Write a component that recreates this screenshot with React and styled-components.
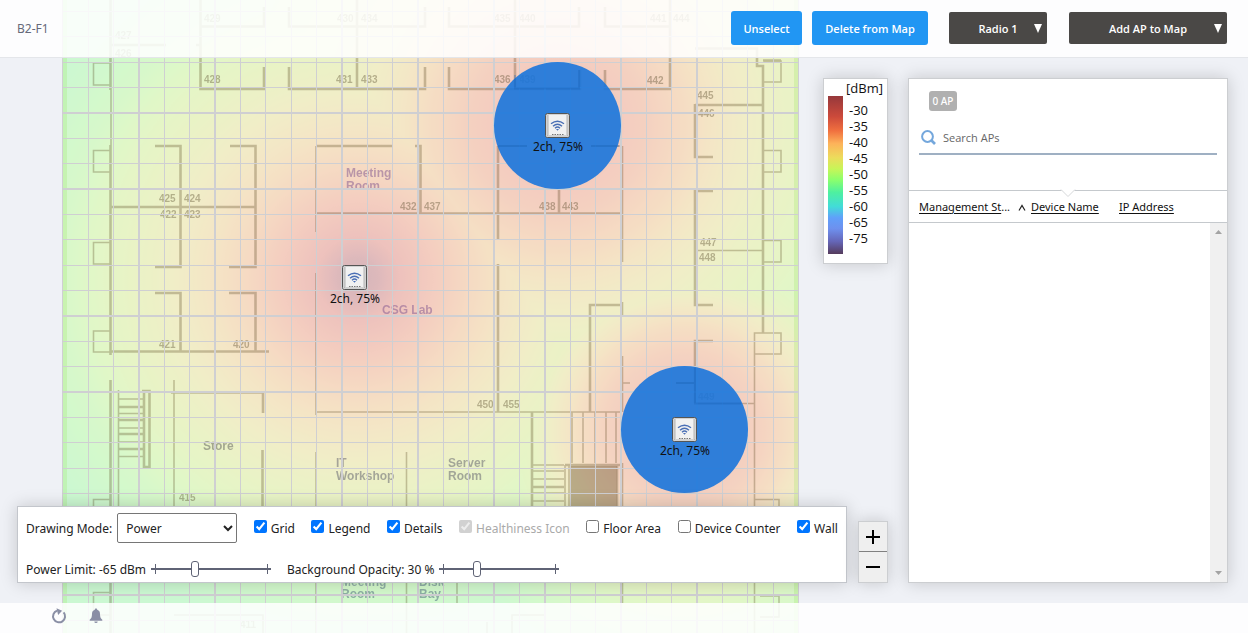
import React, { useState } from 'react'
import styled, { createGlobalStyle } from 'styled-components'

const GlobalStyle = createGlobalStyle`
  * {
    box-sizing: border-box;
  }
  body {
    background: #eff1f6;
    color: #222;
    font-family: "Noto Sans", "Open Sans", sans-serif;
    font-size: 12px;
    margin: 0;
  }
  button, input, select {
    font-family: inherit;
    margin: 0;
  }
`

const Page = styled.div`
  display: grid;
  grid-template-columns: minmax(0, 1fr);
  grid-template-rows: 58px 1fr 30px;
  min-height: 100vh;
  overflow: hidden;
`

const MapLayer = styled.div`
  display: flex;
  grid-column: 1;
  grid-row: 1 / -1;
  height: 100vh;
  padding-left: 62px;
  svg {
    flex: none;
    height: 100%;
    width: 737px;
  }
`

const Header = styled.header`
  align-items: center;
  background: rgba(255, 255, 255, 0.86);
  border-bottom: 1px solid #e4e6ea;
  display: flex;
  grid-column: 1;
  grid-row: 1;
  padding: 0 21px 1px 17px;
  z-index: 1;
  h1 {
    color: #666a7a;
    flex: 1;
    font-size: 12px;
    font-weight: 400;
    margin: 0;
  }
`

const Actions = styled.div`
  align-items: center;
  display: flex;
  gap: 10px;
  margin-right: 21px;
`

const ActionButton = styled.button`
  background: #2196f3;
  border: 0;
  border-radius: 3px;
  color: #fff;
  font-family: "Open Sans", sans-serif;
  font-size: 11px;
  font-weight: 600;
  height: 34px;
  padding: 0;
  width: ${props => props.$width}px;
`

const Menus = styled.div`
  display: flex;
  gap: 22px;
`

const MenuBox = styled.div`
  position: relative;
  width: ${props => props.$width}px;
  select {
    appearance: none;
    background: #4a4846;
    border: 0;
    border-radius: 2px;
    color: #fff;
    font-family: "Open Sans", sans-serif;
    font-size: 11px;
    font-weight: 600;
    height: 32px;
    padding: 0;
    text-align: center;
    text-align-last: center;
    width: 100%;
  }
  svg {
    pointer-events: none;
    position: absolute;
    right: 4px;
    top: 12px;
  }
`

const Main = styled.main`
  display: flex;
  gap: 20px;
  grid-column: 1;
  grid-row: 2;
  padding: 20px 20px 20px 17px;
  z-index: 1;
`

const MapTools = styled.div`
  display: flex;
  flex: 1;
  flex-direction: column;
  justify-content: space-between;
  min-width: 0;
`

const panelShadow = '0 0 16px rgba(0, 0, 0, 0.18)'

const LegendBox = styled.section`
  align-self: flex-end;
  background: #fff;
  border: 1px solid #ccced1;
  box-shadow: ${panelShadow};
  color: #111;
  font-family: "Open Sans", sans-serif;
  font-size: 13px;
  padding: 1px 4px 9px;
  width: 65px;
  h2 {
    font-size: 13px;
    font-weight: 400;
    line-height: 16px;
    margin: 0;
    text-align: right;
  }
`

const LegendScale = styled.div`
  display: flex;
  gap: 6px;
  ul {
    line-height: 16px;
    list-style: none;
    margin: 0;
    padding: 6px 0 8px;
  }
`

const ColorBar = styled.div`
  background: linear-gradient(
    #96383b, #cc4a3b 13%, #f0703f 22%, #fdb25a 30%, #ecdc5c 39%, #c8f558 46%,
    #8cff6c 53%, #4ef0a0 61%, #42dcd8 70%, #60a0fa 77%, #6e90ee 84%, #6566b8 92%, #553b5c
  );
  width: 15px;
`

const BottomRow = styled.div`
  align-items: flex-end;
  display: flex;
  gap: 11px;
`

const Controls = styled.form`
  background: #fff;
  border: 1px solid #c3c6cc;
  box-shadow: ${panelShadow};
  flex: 1;
  min-width: 0;
  padding: 5px 8px 0;
`

const ControlRow = styled.div`
  align-items: center;
  display: flex;
  height: ${props => props.$height}px;
  justify-content: ${props => (props.$spread ? 'space-between' : 'flex-start')};
  gap: ${props => (props.$spread ? 0 : 16)}px;
  margin-top: ${props => (props.$spread ? 0 : 12)}px;
  white-space: nowrap;
`

const Field = styled.label`
  align-items: center;
  display: flex;
  gap: 5px;
`

const ModeSelect = styled.select`
  background: #fff;
  border: 1px solid #767676;
  border-radius: 2px;
  color: #222;
  font-size: 12px;
  height: 30px;
  padding: 0 4px;
  width: 120px;
`

const CheckLabel = styled.label`
  align-items: center;
  color: ${props => (props.$muted ? '#aaa' : '#222')};
  display: flex;
  gap: 4px;
  input {
    height: 13px;
    margin-bottom: 3px;
    width: 13px;
  }
`

const Slider = styled.input`
  appearance: none;
  background:
    linear-gradient(#5f6375, #5f6375) 4px 50% / 1px 10px no-repeat,
    linear-gradient(#5f6375, #5f6375) 116px 50% / 1px 10px no-repeat,
    linear-gradient(#5f6375, #5f6375) 0 50% / 100% 2px no-repeat;
  height: 16px;
  width: 120px;
  &::-webkit-slider-thumb {
    appearance: none;
    background: #fff;
    border: 1px solid #5f6375;
    border-radius: 3px;
    height: 16px;
    width: 8px;
  }
`

const ZoomBox = styled.div`
  border: 1px solid #ccced1;
  box-shadow: ${panelShadow};
  display: flex;
  flex-direction: column;
  width: 30px;
`

const ZoomButton = styled.button`
  align-items: center;
  background: #efefef;
  border: 0;
  display: flex;
  height: 29px;
  justify-content: center;
  padding: 0;
  & + & {
    border-top: 1px solid #808080;
    height: 31px;
  }
`

const ApPanel = styled.aside`
  background: #fff;
  border: 1px solid #ccced1;
  box-shadow: ${panelShadow};
  display: flex;
  flex-direction: column;
  width: 320px;
`

const PanelTop = styled.div`
  border-bottom: 1px solid #c5c9cd;
  height: 112px;
  padding: 12px 10px 0;
  position: relative;
`

const Badge = styled.span`
  background: #b0b0b0;
  border-radius: 3px;
  color: #fff;
  display: block;
  font-size: 10px;
  font-weight: 500;
  height: 20px;
  line-height: 20px;
  margin-left: 10px;
  text-align: center;
  width: 28px;
`

const SearchBox = styled.label`
  align-items: center;
  border-bottom: 2px solid #9fb0c3;
  display: flex;
  gap: 7px;
  height: 34px;
  margin-top: 10px;
  padding-left: 2px;
  input {
    border: 0;
    flex: 1;
    font-family: "Open Sans", sans-serif;
    font-size: 11px;
    outline: 0;
    padding: 0;
  }
  input::placeholder {
    color: #666;
  }
`

const Notch = styled.svg`
  bottom: -8px;
  left: 151px;
  position: absolute;
`

const ApTable = styled.table`
  border-bottom: 1px solid #c5c9cd;
  border-collapse: collapse;
  height: 32px;
  table-layout: fixed;
  width: 100%;
  th {
    font-weight: 400;
    padding: 0;
    text-align: left;
    white-space: nowrap;
  }
  th:first-child {
    padding-left: 10px;
    width: 109px;
  }
  th:nth-child(2) {
    width: 101px;
  }
`

const SortButton = styled.button`
  background: none;
  border: 0;
  color: #111;
  font-size: 11px;
  padding: 0;
  span {
    text-decoration: underline;
    text-underline-offset: 2px;
  }
  svg {
    margin-right: 5px;
  }
`

const ListArea = styled.div`
  display: flex;
  flex: 1;
  justify-content: flex-end;
`

const ScrollTrack = styled.div`
  align-items: center;
  background: #f0f0f0;
  display: flex;
  flex-direction: column;
  justify-content: space-between;
  padding: 7px 0;
  width: 17px;
`

const Footer = styled.footer`
  align-items: center;
  background: rgba(255, 255, 255, 0.86);
  display: flex;
  gap: 22px;
  grid-column: 1;
  grid-row: 3;
  padding: 0 51px 4px;
  z-index: 1;
`

const IconButton = styled.button`
  background: none;
  border: 0;
  color: #8a8fa5;
  display: flex;
  padding: 0;
`

const gridColumns = [
  62.5, 88.5, 113.5, 139, 164.5, 189.5, 215, 240.5, 265.5, 291.5, 316.5, 342, 367.5, 392.5, 418,
  443.5, 468.5, 494, 519.5, 545, 570.5, 595.5, 621, 646.5, 671.5, 697, 722.5, 747.5, 773.5, 798.5
]
const gridRows = [
  11.5, 36.5, 62.5, 87.5, 113, 138.5, 163.5, 189, 214.5, 239.5, 265.5, 290.5, 316, 341.5, 366.5,
  392, 417.5, 442.5, 468.5, 493.5, 519, 544.5, 569.5, 595, 620.5
]

// thick walls, then thin ones
const walls = `
  M110.5 0V90 M110.5 145V355 M110.5 380V633 M110 45H166 M196 45H201
  M200.5 0V89H265 M264 67V89 M200 26.5H264V7
  M289 67V89H425V67 M357 0V89 M289 7V26.5H425V7
  M449 67V89H580V70 M515 0V89 M449 7V26.5H579V7
  M605 70V89H670V0 M605 7V26.5H670
  M695 48.5H757V66H763V333 M763 60.5H781
  M695 105H763 M695 104V157H713 M713 191H695V305H713 M713 341H695V403
  M155 146H180.5V267H155 M230 146H255.5V267H229 M110 207H255
  M155 293H180.5V351 M229 293H255.5V351 M110 351.5H269
  M316 146H392 M415 146H420.5V213 M498 146V240 M498 264V412 M559 190V213
  M316 213.5H621 M590 412V305H622 M171 392.5H263V413 M262.5 450V520
  M144 391V467H149.5V391H142 M532 412V506 M565 465H622
  M118 407H143 M118 420H143 M118 434H143 M118 449H143 M532 487H564
`
const thinWalls = `
  M111 90V145 M93.5 63H110 M93.5 63V85H110 M110 150.5H93.5V172H110
  M110 242.5H93.5V264H110 M110 331H93.5V352H110 M110 499.5H93.5V510 M110 592.5H93.5V615H110
  M764 61H781V82H764 M764 150.5H781V172H764 M764 240.5H781V262H764
  M754.5 633V333H781V354H755 M754 499.5H779V510 M760 596H779V617H760
  M697 250.5H763 M676 383H694 M697 403.5H754 M622 383H630
  M316 146V232 M316 273V415 M316 452V506 M316 583V633 M316 412H622
  M498 146H527 M591 146H622 M622.5 146V262 M622.5 302V317 M622.5 356V412 M622.5 463V603
  M174 380V520 M118.5 390V510 M118 399H143 M118 413.5H143
  M118 428H143 M118 442H143 M118 456.5H143
  M406.5 452V506 M406.5 583V633 M457 583V603
  M572 412V463 M583 412V463 M595 412V463 M606 412V463 M616 412V463
  M532 465H564 M532 471H564 M532 479H564 M532 493H564 M532 501H564
  M565 465V510 M569 465V510 M617.5 465V510 M174 615H263V633 M512 633V615H545 M487 622V633
`

const roomNumbers = [
  ['427', 115, 39], ['426', 115, 57], ['429', 204, 22], ['430', 337, 22], ['434', 361, 22],
  ['435', 494, 22], ['440', 519, 22], ['441', 650, 22], ['444', 673, 22],
  ['428', 204, 83], ['431', 336, 83], ['433', 361, 83], ['436', 494, 83], ['439', 519, 83],
  ['442', 647, 84], ['445', 697, 99], ['446', 698, 117], ['425', 159, 202], ['424', 184, 202],
  ['422', 160, 218], ['423', 184, 218], ['432', 400, 210], ['437', 424, 210], ['438', 539, 210],
  ['443', 562, 210], ['447', 700, 246], ['448', 699, 261], ['421', 159, 348], ['420', 233, 348],
  ['449', 698, 400], ['450', 477, 408], ['455', 503, 408], ['415', 179, 501], ['411', 240, 628]
]

const roomNames = [
  ['Meeting', 346, 177, '#7a4f8c'], ['Room', 346, 190, '#7a4f8c'], ['CSG Lab', 382, 314, '#7a4f8c'],
  ['Store', 203, 450, '#555'], ['IT', 336, 467, '#555566'], ['Workshop', 336, 480, '#555566'],
  ['Server', 448, 467, '#555566'], ['Room', 448, 480, '#555566'],
  ['Meeting', 341, 586, '#44607a'], ['Room', 341, 598, '#44607a'],
  ['Disk', 419, 586, '#44607a'], ['Bay', 419, 598, '#44607a']
]

// signal strength by distance from the access point, 0 to 1
const signals = [
  {
    id: 'ap1', x: 358, y: 278, r: 400,
    stops: [[0, 1], [0.05, 0.97], [0.12, 0.88], [0.2, 0.79], [0.3, 0.67], [0.4, 0.56], [0.5, 0.46], [0.62, 0.36], [0.74, 0.23], [1, 0.06]]
  },
  {
    id: 'ap2', x: 558, y: 125, r: 400,
    stops: [[0, 0.88], [0.15, 0.81], [0.22, 0.77], [0.32, 0.67], [0.42, 0.55], [0.54, 0.44], [0.66, 0.36], [0.8, 0.25], [1, 0.1]]
  },
  {
    id: 'ap3', x: 684, y: 430, r: 260,
    stops: [[0, 0.88], [0.2, 0.81], [0.31, 0.74], [0.4, 0.65], [0.48, 0.54], [0.58, 0.4], [0.72, 0.28], [1, 0.12]]
  }
]

const accessPoints = [
  { id: 'ap1', x: 354, y: 278, selected: false },
  { id: 'ap2', x: 557, y: 126, selected: true },
  { id: 'ap3', x: 684, y: 430, selected: true }
]

const gray = value => {
  const level = Math.round(value * 255)
  return `rgb(${level}, ${level}, ${level})`
}

const Heatmap = () => (
  <g>
    <defs>
      <filter id="ramp" x="0" y="0" width="1" height="1" colorInterpolationFilters="sRGB">
        <feComponentTransfer>
          <feFuncR type="table" tableValues=".75 .79 .83 .88 .915 .945 .96 .965 .957 .933 .84" />
          <feFuncG type="table" tableValues=".973 .973 .977 .972 .955 .933 .9 .855 .804 .76 .71" />
          <feFuncB type="table" tableValues=".86 .83 .8 .784 .776 .784 .776 .765 .753 .741 .735" />
        </feComponentTransfer>
      </filter>
      {signals.map(signal => (
        <radialGradient key={signal.id} id={signal.id} gradientUnits="userSpaceOnUse" cx={signal.x} cy={signal.y} r={signal.r}>
          {signal.stops.map(([offset, value]) => (
            <stop key={offset} offset={offset} stopColor={gray(value)} />
          ))}
        </radialGradient>
      ))}
    </defs>
    <g filter="url(#ramp)">
      <rect x="62" width="737" height="633" fill={gray(0.06)} />
      {signals.map(signal => (
        <rect key={signal.id} x="62" width="737" height="633" fill={`url(#${signal.id})`} style={{ mixBlendMode: 'lighten' }} />
      ))}
    </g>
    <path d="M62 0h5v633h-5z M794 0h5v633h-5z" fill="#9be564" opacity=".25" />
  </g>
)

const ApMarker = ({ x, y }) => (
  <g>
    <rect x={x - 11.5} y={y - 12.5} width="24" height="24" rx="2" fill="#d2d2d2" stroke="#555" />
    <rect x={x - 9} y={y - 11} width="19" height="20" fill="#f1f1f1" />
    <path d={`M${x - 9} ${y - 11}v20l-2 2 M${x + 10} ${y - 11}v20l2 2`} fill="none" stroke="#b5b5b5" />
    <g fill="none" stroke="#4a6fb5" strokeWidth="1.4">
      <path d={`M${x - 6} ${y - 2.2}Q${x + 0.5} ${y - 7.2} ${x + 7} ${y - 2.2}`} />
      <path d={`M${x - 4} ${y + 0.2}Q${x + 0.5} ${y - 3.8} ${x + 5} ${y + 0.2}`} />
      <path d={`M${x - 2} ${y + 2.2}Q${x + 0.5} ${y} ${x + 3} ${y + 2.2}`} />
    </g>
    <path d={`M${x - 1} ${y + 3}h3l-1.5 1.8z`} fill="#4a6fb5" />
    <path d={`M${x - 5} ${y + 8.5}h12`} stroke="#777" strokeDasharray="1.5 1" />
    <text x={x + 1} y={y + 25} textAnchor="middle" fontSize="12" fill="#111">2ch, 75%</text>
  </g>
)

const FloorMap = ({ showGrid }) => (
  <svg viewBox="62 0 737 633" preserveAspectRatio="xMinYMin slice" role="img" aria-label="B2-F1">
    <Heatmap />
    <g fill="none" stroke="#4d3a12" opacity=".28">
      <path d={walls} strokeWidth="2.6" />
      <path d={thinWalls} strokeWidth="1.6" />
    </g>
    <rect x="570" y="466" width="47" height="45" fill="#5c4420" opacity=".38" />
    <g fontFamily="Liberation Sans, sans-serif" fontWeight="700">
      <g fontSize="10" fill="#4d4020" opacity=".36">
        {roomNumbers.map(([label, x, y]) => <text key={label} x={x} y={y}>{label}</text>)}
      </g>
      <g fontSize="12" opacity=".48">
        {roomNames.map(([label, x, y, color]) => <text key={`${label}${x}${y}`} x={x} y={y} fill={color}>{label}</text>)}
      </g>
    </g>
    {showGrid && (
      <g stroke="#cfcfd2">
        {gridColumns.map(x => <path key={x} d={`M${x} 0V633`} strokeWidth={x % 1 ? 1 : 2} />)}
        {gridRows.map(y => <path key={y} d={`M62 ${y}H799`} strokeWidth={y % 1 ? 1 : 2} />)}
      </g>
    )}
    {accessPoints.filter(ap => ap.selected).map(ap => (
      <circle key={ap.id} cx={ap.x + 0.5} cy={ap.y - 0.5} r="63.5" fill="#1976db" opacity=".9" />
    ))}
    <path d="M515 75V88.5H579V70 M498 146H527 M591 146H619 M676 383H694 M695 368V403.5H741" fill="none" stroke="#1b5fb4" strokeWidth="2" opacity=".3" />
    {accessPoints.map(ap => <ApMarker key={ap.id} x={ap.x} y={ap.y} />)}
  </svg>
)

const MenuSelect = ({ label, width }) => (
  <MenuBox $width={width}>
    <select aria-label={label}>
      <option>{label}</option>
    </select>
    <svg width="10" height="9" viewBox="0 0 10 9" aria-hidden="true">
      <path d="M1 0h8L5 9z" fill="#fff" />
    </svg>
  </MenuBox>
)

const Legend = () => (
  <LegendBox>
    <h2>[dBm]</h2>
    <LegendScale>
      <ColorBar />
      <ul>
        {[-30, -35, -40, -45, -50, -55, -60, -65, -75].map(level => <li key={level}>{level}</li>)}
      </ul>
    </LegendScale>
  </LegendBox>
)

const options = [
  { name: 'Grid', checked: true },
  { name: 'Legend', checked: true },
  { name: 'Details', checked: true },
  { name: 'Healthiness Icon', checked: true, disabled: true },
  { name: 'Floor Area', checked: false },
  { name: 'Device Counter', checked: false },
  { name: 'Wall', checked: true }
]

const App = () => {
  const [checks, setChecks] = useState(() => Object.fromEntries(options.map(o => [o.name, o.checked])))
  const [limit, setLimit] = useState(-65)
  const [opacity, setOpacity] = useState(30)

  return (
    <Page>
      <GlobalStyle />
      <MapLayer>
        <FloorMap showGrid={checks.Grid} />
      </MapLayer>
      <Header>
        <h1>B2-F1</h1>
        <Actions>
          <ActionButton type="button" $width={71}>Unselect</ActionButton>
          <ActionButton type="button" $width={116}>Delete from Map</ActionButton>
        </Actions>
        <Menus>
          <MenuSelect label="Radio 1" width={98} />
          <MenuSelect label="Add AP to Map" width={158} />
        </Menus>
      </Header>
      <Main>
        <MapTools>
          <Legend />
          <BottomRow>
            <Controls>
              <ControlRow $height={32} $spread>
                <Field>
                  Drawing Mode:
                  <ModeSelect>
                    <option>Power</option>
                  </ModeSelect>
                </Field>
                {options.map(option => (
                  <CheckLabel key={option.name} $muted={option.disabled}>
                    <input
                      type="checkbox"
                      checked={checks[option.name]}
                      disabled={option.disabled}
                      onChange={e => setChecks({ ...checks, [option.name]: e.target.checked })}
                    />
                    {option.name}
                  </CheckLabel>
                ))}
              </ControlRow>
              <ControlRow $height={26}>
                <Field>
                  Power Limit: {limit} dBm
                  <Slider type="range" min="-80" max="-38" value={limit} onChange={e => setLimit(Number(e.target.value))} />
                </Field>
                <Field>
                  Background Opacity: {opacity} %
                  <Slider type="range" min="0" max="100" value={opacity} onChange={e => setOpacity(Number(e.target.value))} />
                </Field>
              </ControlRow>
            </Controls>
            <ZoomBox>
              <ZoomButton type="button" aria-label="Zoom in">
                <svg width="14" height="14"><path d="M0 7h14M7 0v14" stroke="#000" strokeWidth="2" /></svg>
              </ZoomButton>
              <ZoomButton type="button" aria-label="Zoom out">
                <svg width="14" height="14"><path d="M0 7h14" stroke="#000" strokeWidth="2" /></svg>
              </ZoomButton>
            </ZoomBox>
          </BottomRow>
        </MapTools>
        <ApPanel>
          <PanelTop>
            <Badge>0 AP</Badge>
            <SearchBox>
              <svg width="15" height="15" viewBox="0 0 15 15" fill="none" stroke="#74a7dc" aria-hidden="true">
                <circle cx="6.5" cy="6.5" r="5.4" strokeWidth="2" />
                <path d="M10 10l4 4" strokeWidth="2.6" />
              </svg>
              <input type="text" placeholder="Search APs" aria-label="Search APs" />
            </SearchBox>
            <Notch width="16" height="9" viewBox="0 0 16 9" aria-hidden="true">
              <path d="M1 0h14v1L8 8 1 1z" fill="#fff" />
              <path d="M1 .5L8 7.5 15 .5" fill="none" stroke="#d5d7d9" />
            </Notch>
          </PanelTop>
          <ApTable>
            <thead>
              <tr>
                <th><SortButton type="button"><span>Management St</span>...</SortButton></th>
                <th>
                  <SortButton type="button">
                    <svg width="8" height="7"><path d="M1 6.5l3-5 3 5" fill="none" stroke="#222" strokeWidth="1.2" /></svg>
                    <span>Device Name</span>
                  </SortButton>
                </th>
                <th><SortButton type="button"><span>IP Address</span></SortButton></th>
              </tr>
            </thead>
          </ApTable>
          <ListArea>
            <ScrollTrack aria-hidden="true">
              <svg width="7" height="4"><path d="M0 4l3.5-4L7 4z" fill="#a3a3a3" /></svg>
              <svg width="7" height="4"><path d="M0 0h7L3.5 4z" fill="#a3a3a3" /></svg>
            </ScrollTrack>
          </ListArea>
        </ApPanel>
      </Main>
      <Footer>
        <IconButton type="button" aria-label="Reload">
          <svg width="16" height="16" viewBox="0 0 16 16">
            <path d="M12.6 4.4A6 6 0 1 1 6 2.7" fill="none" stroke="currentColor" strokeWidth="2" />
            <path d="M5.5.2l5.6 2.5-4 4.2z" fill="currentColor" />
          </svg>
        </IconButton>
        <IconButton type="button" aria-label="Notifications">
          <svg width="14" height="16" viewBox="0 0 14 16" fill="currentColor">
            <path d="M7 .5c.8 0 1.2.5 1.2 1.2 2 .6 2.8 2.3 2.8 4.3 0 3.2.8 4.6 2.3 5.8v.9H.7v-.9C2.2 10.600 3 9.200 3 6c0-2 .8-3.7 2.8-4.3C5.8 1 6.2.5 7 .5z" />
            <path d="M5.3 13.4h3.4a1.7 1.7 0 0 1-3.4 0z" />
          </svg>
        </IconButton>
      </Footer>
    </Page>
  )
}

export default App
